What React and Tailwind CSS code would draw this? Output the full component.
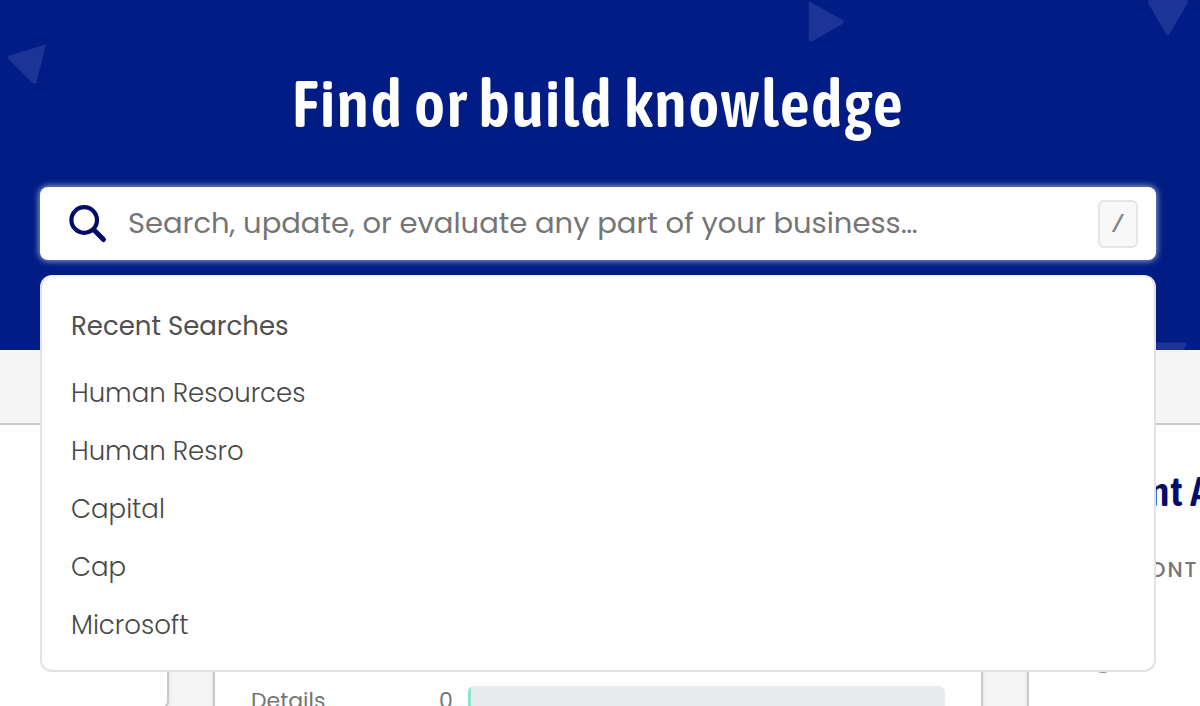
import React from "react";

const recentSearches = ["Human Resources", "Human Resro", "Capital", "Cap", "Microsoft"];

function Backdrop() {
  return (
    <div aria-hidden="true" className="pointer-events-none absolute inset-0 overflow-hidden">
      <svg className="absolute left-2 top-11 h-10 w-10" viewBox="0 0 40 40">
        <path d="M1 12.5 37 1.5 27.5 38.5 25 38.5 1 14.5Z" fill="#1c3497" stroke="#1c3497" strokeWidth="1.5" strokeLinejoin="round" />
      </svg>
      <svg className="absolute right-[356px] top-0 h-11 w-9" viewBox="0 0 36 44">
        <path d="M1.5 2.5 35 21 34.5 23 3 41 1.5 40Z" fill="#1c3497" stroke="#1c3497" strokeWidth="1.5" strokeLinejoin="round" />
      </svg>
      <svg className="absolute right-3 top-0 h-9 w-10" viewBox="0 0 40 36">
        <path d="M1 0H39V2.5L20.5 34H19L1 3Z" fill="#1c3497" stroke="#1c3497" strokeWidth="1.5" strokeLinejoin="round" />
      </svg>
      <svg className="absolute bottom-0 right-3 h-2 w-10" viewBox="0 0 40 8">
        <path d="M1 1H37.5L38.5 2.5 35 8H4L1 3Z" fill="#1c3497" stroke="#1c3497" strokeLinejoin="round" />
      </svg>
    </div>
  );
}

function SearchPanel() {
  return (
    <div className="relative z-10">
      <form
        role="search"
        onSubmit={(e) => e.preventDefault()}
        className="flex h-[73px] items-center rounded-lg bg-white pl-7 pr-[18px] shadow-[0_0_6px_1px_rgba(255,255,255,0.6)]"
      >
        <svg className="size-10 shrink-0 text-[#020d6b]" viewBox="0 0 40 40" fill="none" stroke="currentColor" aria-hidden="true">
          <circle cx="16.2" cy="16" r="12.8" strokeWidth="4.2" />
          <path d="m25.5 25.5 10 10" strokeWidth="5" strokeLinecap="round" />
        </svg>
        <input
          type="text"
          aria-label="Search"
          placeholder="Search, update, or evaluate any part of your business…"
          className="ml-5 min-w-0 flex-1 bg-transparent text-[29px] text-[#757575] outline-none placeholder:text-[#757575]"
        />
        <kbd className="flex h-12 w-10 items-center justify-center rounded-md border-2 border-[#e5e5e5] bg-[#f8f8f8] pt-1 font-['Liberation_Mono',monospace] text-2xl font-bold text-[#858585]">/</kbd>
      </form>
      <section className="absolute inset-x-0 top-full mt-[15px] rounded-xl border-2 border-[#e2e2e2] border-t-[#eef0fa] bg-white px-[29px] pb-4 pt-3">
        <h2 className="flex h-[75px] items-center text-[26px] font-normal text-[#505050]">Recent Searches</h2>
        <ul>
          {recentSearches.map((term) => (
            <li key={term}>
              <button type="button" className="flex h-[58px] w-full items-center text-left text-[26px] font-light text-[#484848]">
                {term}
              </button>
            </li>
          ))}
        </ul>
      </section>
    </div>
  );
}

export default function App() {
  return (
    <div className="flex h-screen flex-col overflow-hidden bg-[#f5f5f5] font-[Poppins,Inter,sans-serif]">
      <header className="relative h-[350px] shrink-0 bg-[#011d85] pl-10 pr-11 pt-[63px]">
        <Backdrop />
        <h1 className="relative mb-11 whitespace-nowrap text-center font-['Asap_Condensed','Open_Sans_Condensed','Roboto_Condensed',sans-serif] text-[66px] font-semibold leading-[80px] tracking-wide text-white">
          Find or build knowledge
        </h1>
        <SearchPanel />
      </header>

      <main className="mt-[73px] flex shrink-0 items-start gap-[44px]">
        <section className="h-[286px] w-[169px] shrink-0 rounded-br-lg border-2 border-l-0 border-[#c9c9c9] bg-white shadow-md" />

        <section className="h-[340px] min-w-0 flex-1 border-2 border-[#c9c9c9] bg-white px-9 pt-[261px] shadow-md">
          <div className="flex h-7 items-center text-[22px] text-[#757575]">
            <span className="w-[188px]">Details</span>
            <span className="w-[29px]">0</span>
            <div className="h-full flex-1 overflow-hidden rounded-md bg-[#e8eaed]">
              <div className="h-full w-[3px] bg-[#8be5cb]" />
            </div>
          </div>
        </section>

        <section className="relative h-[340px] w-[173px] shrink-0 overflow-hidden border-2 border-r-0 border-[#c9c9c9] bg-white pl-[120px] shadow-md">
          <h2 className="mt-[46px] whitespace-nowrap font-['Asap_Condensed','Open_Sans_Condensed','Roboto_Condensed',sans-serif] text-[42px] font-semibold leading-10 tracking-wide text-[#020d6b]">nt A</h2>
          <p className="mt-[45px] text-[21px] font-medium leading-7 tracking-[2px] text-[#757575]">ONT</p>
          <span aria-hidden="true" className="absolute left-[61px] top-[222px] size-[26px] rounded-full bg-[#8a8a8a]" />
        </section>
      </main>
    </div>
  );
}
